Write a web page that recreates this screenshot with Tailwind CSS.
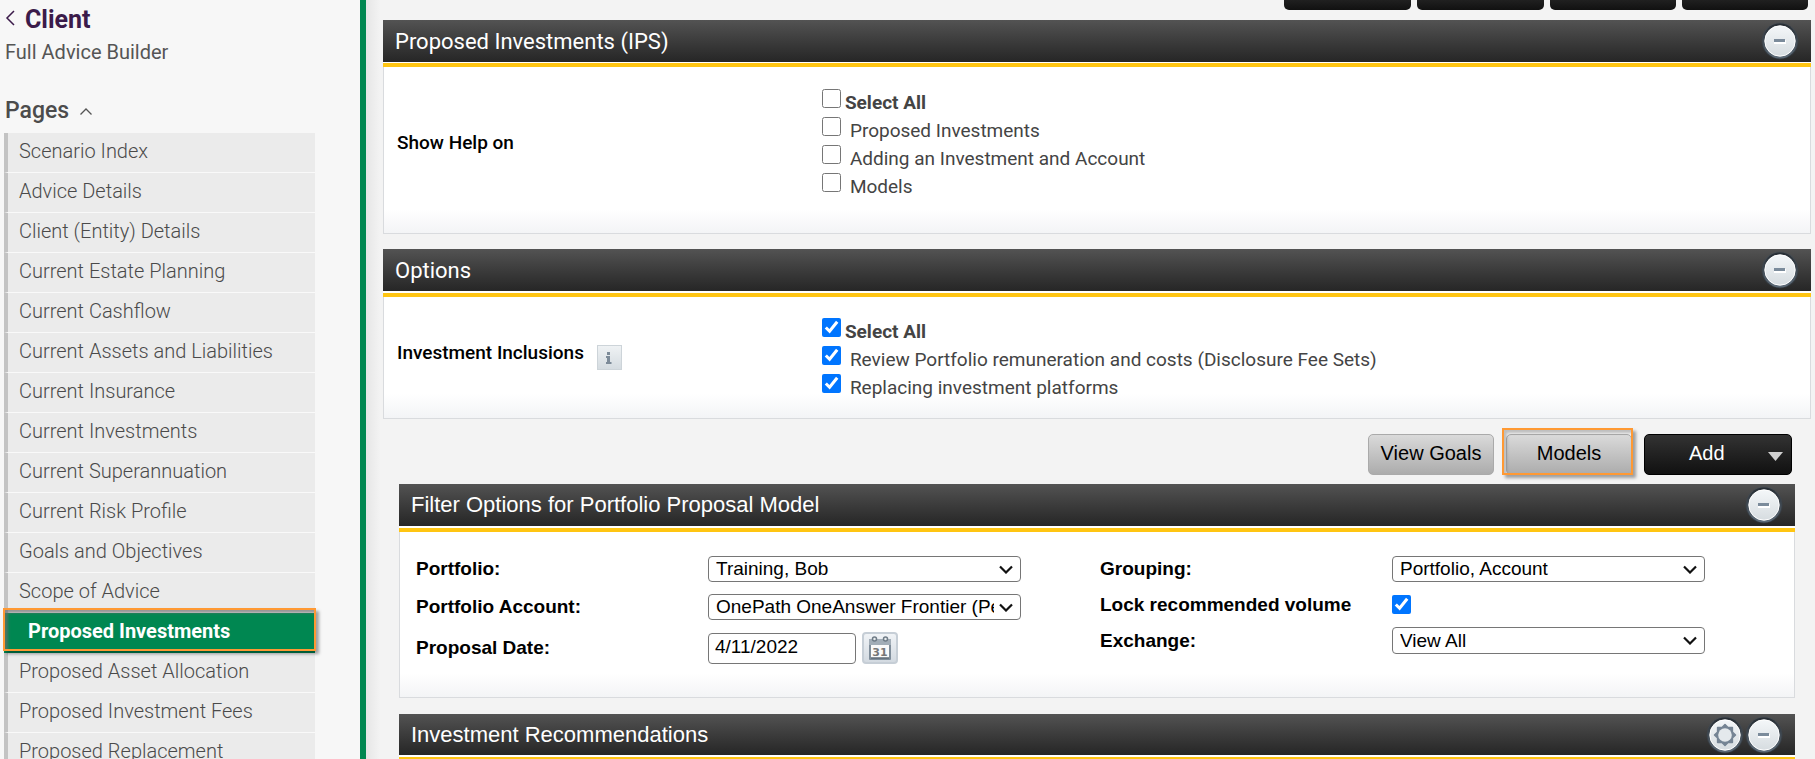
<!DOCTYPE html>
<html lang="en">
<head>
<meta charset="utf-8">
<title>Proposed Investments</title>
<script src="https://cdn.jsdelivr.net/npm/@tailwindcss/browser@4"></script>
</head>
<body class="h-screen overflow-hidden flex bg-[#f3f3f3] font-['Roboto',sans-serif] text-[#444]">

<svg class="absolute size-0" aria-hidden="true">
  <defs>
    <linearGradient id="disc" x1="0" y1="0" x2="0" y2="1"><stop offset="0" stop-color="#f4f7f9"/><stop offset="1" stop-color="#d6dce0"/></linearGradient>
    <linearGradient id="rim" x1="0" y1="0" x2="0" y2="1"><stop offset="0" stop-color="#262c32"/><stop offset="1" stop-color="#5d6b78"/></linearGradient>
  </defs>
  <symbol id="round" viewBox="0 0 38 38">
    <circle cx="19" cy="19" r="18.5" fill="#3d4c5a" opacity=".4"/>
    <circle cx="19" cy="19" r="17.5" fill="url(#rim)"/>
    <circle cx="19" cy="19" r="15.2" fill="url(#disc)" stroke="#fff" stroke-width="1"/>
  </symbol>
  <symbol id="minus" viewBox="0 0 38 38">
    <use href="#round"/>
    <rect x="13" y="18" width="12" height="4" fill="#fff"/>
    <rect x="13" y="17" width="11" height="3" fill="#7b8b9b"/>
  </symbol>
  <symbol id="gear" viewBox="0 0 38 38">
    <use href="#round"/>
    <path d="M19 8.500 22 11.600 26.400 11.600 26.400 16 29.500 19 26.400 22 26.400 26.400 22 26.400 19 29.500 16 26.400 11.600 26.400 11.600 22 8.500 19 11.600 16 11.600 11.600 16 11.600Z" fill="#758494" stroke="#758494" stroke-width="1.500" stroke-linejoin="round"/>
    <circle cx="19" cy="19" r="6.800" fill="#e4e9ec"/>
  </symbol>
  <symbol id="chevron" viewBox="0 0 14 9"><path d="M1 1.500 7 7.500 13 1.500" fill="none" stroke="#111" stroke-width="2.200"/></symbol>
</svg>

<aside class="w-[366px] shrink-0 border-r-6 border-[#008751] bg-[#f7f7f7] overflow-hidden">
  <header class="pl-[5px] pt-1">
    <a href="#" class="flex items-center gap-[10px] text-[25px] leading-8 font-bold text-[#3b1b4a]">
      <svg class="w-[10px] h-4 -mt-1" viewBox="0 0 10 16" fill="none" stroke="#3b1b4a" stroke-width="1.5" aria-hidden="true"><path d="M9 1 2 8 9 15"/></svg>
      <span>Client</span>
    </a>
    <p class="text-xl leading-8 text-[#555]">Full Advice Builder</p>
  </header>
  <button type="button" class="mt-[25px] pl-[5px] flex items-center gap-[11px] text-[23px] leading-9 font-medium text-[#4c4c4c]">Pages
    <svg class="w-3 h-[7px]" viewBox="0 0 12 7" fill="none" stroke="#555" stroke-width="1.3" aria-hidden="true"><path d="M.5 6.5 6 1 11.5 6.5"/></svg>
  </button>
  <nav class="mt-1 ml-1 w-[311px] text-xl font-light text-[#4a4a4a]">
    <a href="#" class="flex items-center h-10 pl-[11px] pb-[3px] border-l-4 border-l-[#c3c3c3] border-b border-b-[#f9f9f9] bg-[#ebebeb]">Scenario Index</a>
    <a href="#" class="flex items-center h-10 pl-[11px] pb-[3px] border-l-4 border-l-[#c3c3c3] border-b border-b-[#f9f9f9] bg-[#ebebeb]">Advice Details</a>
    <a href="#" class="flex items-center h-10 pl-[11px] pb-[3px] border-l-4 border-l-[#c3c3c3] border-b border-b-[#f9f9f9] bg-[#ebebeb]">Client (Entity) Details</a>
    <a href="#" class="flex items-center h-10 pl-[11px] pb-[3px] border-l-4 border-l-[#c3c3c3] border-b border-b-[#f9f9f9] bg-[#ebebeb]">Current Estate Planning</a>
    <a href="#" class="flex items-center h-10 pl-[11px] pb-[3px] border-l-4 border-l-[#c3c3c3] border-b border-b-[#f9f9f9] bg-[#ebebeb]">Current Cashflow</a>
    <a href="#" class="flex items-center h-10 pl-[11px] pb-[3px] border-l-4 border-l-[#c3c3c3] border-b border-b-[#f9f9f9] bg-[#ebebeb]">Current Assets and Liabilities</a>
    <a href="#" class="flex items-center h-10 pl-[11px] pb-[3px] border-l-4 border-l-[#c3c3c3] border-b border-b-[#f9f9f9] bg-[#ebebeb]">Current Insurance</a>
    <a href="#" class="flex items-center h-10 pl-[11px] pb-[3px] border-l-4 border-l-[#c3c3c3] border-b border-b-[#f9f9f9] bg-[#ebebeb]">Current Investments</a>
    <a href="#" class="flex items-center h-10 pl-[11px] pb-[3px] border-l-4 border-l-[#c3c3c3] border-b border-b-[#f9f9f9] bg-[#ebebeb]">Current Superannuation</a>
    <a href="#" class="flex items-center h-10 pl-[11px] pb-[3px] border-l-4 border-l-[#c3c3c3] border-b border-b-[#f9f9f9] bg-[#ebebeb]">Current Risk Profile</a>
    <a href="#" class="flex items-center h-10 pl-[11px] pb-[3px] border-l-4 border-l-[#c3c3c3] border-b border-b-[#f9f9f9] bg-[#ebebeb]">Goals and Objectives</a>
    <a href="#" class="flex items-center h-10 pl-[11px] pb-1 border-l-4 border-l-[#c3c3c3] bg-[#ebebeb]">Scope of Advice</a>
    <a href="#" aria-current="page" class="relative flex items-center h-10 pl-6 pb-1 bg-[#008751] font-bold text-white">Proposed Investments
      <span class="absolute -inset-x-px -top-[5px] bottom-[2px] border-2 border-[#ff9933] shadow-[3px_3px_3px_rgba(0,0,0,.35),inset_3px_3px_3px_rgba(110,110,110,.7)]"></span>
    </a>
    <a href="#" class="flex items-center h-10 pl-[11px] pb-[3px] border-l-4 border-l-[#c3c3c3] border-b border-b-[#f9f9f9] bg-[#ebebeb]">Proposed Asset Allocation</a>
    <a href="#" class="flex items-center h-10 pl-[11px] pb-[3px] border-l-4 border-l-[#c3c3c3] border-b border-b-[#f9f9f9] bg-[#ebebeb]">Proposed Investment Fees</a>
    <a href="#" class="flex items-center h-10 pl-[11px] pb-[3px] border-l-4 border-l-[#c3c3c3] border-b border-b-[#f9f9f9] bg-[#ebebeb]">Proposed Replacement</a>
  </nav>
</aside>

<main class="flex-1 min-w-0 pl-[17px] pr-1 bg-[linear-gradient(to_right,#e6e6e6,#f3f3f3_14px)]">
  <div class="flex justify-end gap-1.5 pr-[3px]">
    <button type="button" aria-label="Action 1" class="w-[127px] h-[10px] rounded-b-[5px] bg-linear-to-b from-[#202020] to-[#111]"></button>
    <button type="button" aria-label="Action 2" class="w-[127px] h-[10px] rounded-b-[5px] bg-linear-to-b from-[#202020] to-[#111]"></button>
    <button type="button" aria-label="Action 3" class="w-[126px] h-[10px] rounded-b-[5px] bg-linear-to-b from-[#202020] to-[#111]"></button>
    <button type="button" aria-label="Action 4" class="w-[126px] h-[10px] rounded-b-[5px] bg-linear-to-b from-[#202020] to-[#111]"></button>
  </div>

  <section class="mt-[10px]">
    <div class="flex items-center justify-between h-[42px] pl-3 pr-3 bg-linear-to-b from-[#535353] to-[#262626]">
      <h2 class="text-[22px] text-white">Proposed Investments (IPS)</h2>
      <button type="button" aria-label="Collapse"><svg class="size-[38px]"><use href="#minus"/></svg></button>
    </div>
    <div class="h-px bg-white"></div>
    <div class="h-1 bg-[#ffc512]"></div>
    <div class="grid grid-cols-[30%_1fr] items-start pl-[13px] pt-[22px] pb-8 border border-t-0 border-[#d9dbde] bg-[linear-gradient(to_top,#f3f4f6,#fff_24px)] text-[19px] leading-7">
      <h3 class="mt-10 font-medium text-black">Show Help on</h3>
      <div class="pl-px">
        <label class="flex gap-1 font-bold"><input type="checkbox" class="size-[19px]">Select All</label>
        <label class="flex gap-[9px]"><input type="checkbox" class="size-[19px]">Proposed Investments</label>
        <label class="flex gap-[9px]"><input type="checkbox" class="size-[19px]">Adding an Investment and Account</label>
        <label class="flex gap-[9px]"><input type="checkbox" class="size-[19px]">Models</label>
      </div>
    </div>
  </section>

  <section class="mt-[15px]">
    <div class="flex items-center justify-between h-[42px] pl-3 pr-3 bg-linear-to-b from-[#535353] to-[#262626]">
      <h2 class="text-[22px] text-white">Options</h2>
      <button type="button" aria-label="Collapse"><svg class="size-[38px]"><use href="#minus"/></svg></button>
    </div>
    <div class="h-0.5 bg-white"></div>
    <div class="h-1 bg-[#ffc512]"></div>
    <div class="grid grid-cols-[30%_1fr] items-start pl-[13px] pt-[21px] pb-4 border border-t-0 border-[#d9dbde] bg-[linear-gradient(to_top,#f3f4f6,#fff_24px)] text-[19px] leading-7">
      <div class="mt-[21px] h-[31px] flex gap-[13px]">
        <h3 class="font-medium text-black">Investment Inclusions</h3>
        <button type="button" aria-label="Information" class="self-end size-[25px] flex items-center justify-center border border-[#cdd4d9] bg-linear-to-b from-[#eff2f4] to-[#d5dce1]">
          <svg class="w-[6px] h-3" viewBox="0 0 6 12" fill="#7d8b99" aria-hidden="true"><path d="M1 0h3v3H1zM0 4h4v6h1.5v2H0v-2h1V6H0z"/></svg>
        </button>
      </div>
      <div class="pl-px">
        <label class="flex gap-1 font-bold"><input type="checkbox" checked class="size-[19px]">Select All</label>
        <label class="flex gap-[9px]"><input type="checkbox" checked class="size-[19px]">Review Portfolio remuneration and costs (Disclosure Fee Sets)</label>
        <label class="flex gap-[9px]"><input type="checkbox" checked class="size-[19px]">Replacing investment platforms</label>
      </div>
    </div>
  </section>

  <div class="px-4 font-['Liberation_Sans',Arial,sans-serif] text-black">
    <div class="mt-[15px] flex justify-end gap-3 pr-[3px] text-xl">
      <button type="button" class="w-[126px] h-[41px] pb-1 rounded-[5px] border border-[#aaa] bg-linear-to-b from-[#dadada] to-[#acacac]">View Goals</button>
      <button type="button" class="relative w-[126px] h-[41px] pb-1 rounded-[5px] border border-[#aaa] bg-linear-to-b from-[#dadada] to-[#acacac]">Models
        <span class="absolute -left-[5px] -right-[2px] -top-[7px] -bottom-px border-2 border-[#ff9933] shadow-[3px_3px_3px_rgba(0,0,0,.35),inset_3px_3px_3px_rgba(110,110,110,.4)]"></span>
      </button>
      <button type="button" class="w-[148px] h-[41px] pl-11 pr-2 pb-1 flex items-center justify-between rounded-[5px] border border-black bg-linear-to-b from-[#333] to-[#111] text-white">Add
        <svg class="w-[15px] h-[9px] mt-2" viewBox="0 0 15 9" aria-hidden="true"><path d="M0 0H15L7.5 9Z" fill="#d0d0d0"/></svg>
      </button>
    </div>

    <section class="mt-[9px]">
      <div class="flex items-center justify-between h-[42px] pl-3 pr-3 bg-linear-to-b from-[#535353] to-[#262626]">
        <h2 class="text-[22px] leading-10 text-white">Filter Options for Portfolio Proposal Model</h2>
        <button type="button" aria-label="Collapse"><svg class="size-[38px]"><use href="#minus"/></svg></button>
      </div>
      <div class="h-0.5 bg-white"></div>
      <div class="h-1 bg-[#ffc512]"></div>
      <div class="grid grid-cols-2 items-start pl-4 pr-[10px] pt-6 pb-[33px] border border-t-0 border-[#d9dbde] bg-[linear-gradient(to_top,#f3f4f6,#fff_24px)] text-[19px]">
        <div class="flex flex-col gap-3">
          <div class="flex items-center">
            <label for="portfolio" class="w-[292px] font-bold leading-6">Portfolio:</label>
            <div class="relative">
              <select id="portfolio" class="block appearance-none w-[313px] h-[26px] pl-[7px] pr-[26px] rounded-[4px] border border-[#767676] bg-white leading-6"><option>Training, Bob</option></select>
              <svg class="absolute right-2 top-[9px] w-[14px] h-[9px] pointer-events-none"><use href="#chevron"/></svg>
            </div>
          </div>
          <div class="flex items-center">
            <label for="account" class="w-[292px] font-bold leading-6">Portfolio Account:</label>
            <div class="relative">
              <select id="account" class="block appearance-none w-[313px] h-[26px] pl-[7px] pr-[26px] rounded-[4px] border border-[#767676] bg-white leading-6"><option>OnePath OneAnswer Frontier (Personal)</option></select>
              <svg class="absolute right-2 top-[9px] w-[14px] h-[9px] pointer-events-none"><use href="#chevron"/></svg>
            </div>
          </div>
          <div class="flex items-center">
            <label for="date" class="w-[292px] font-bold leading-6">Proposal Date:</label>
            <input id="date" type="text" value="4/11/2022" class="w-[148px] h-[31px] px-1.5 pb-0.5 rounded-[4px] border border-[#767676] bg-white">
            <button type="button" aria-label="Choose date" class="ml-1.5 w-9 h-8 flex items-center justify-center rounded-[4px] border-2 border-[#c6ced6] bg-linear-to-b from-[#f0f3f6] to-[#d3dae1]">
              <svg class="w-6 h-[25px]" viewBox="0 0 24 25" aria-hidden="true">
                <rect x="1" y="3" width="22" height="21" rx="1" fill="#7f8d9a"/>
                <rect x="1" y="3" width="22" height="6" fill="#a2adb7"/>
                <rect x="3" y="9" width="18" height="13" fill="#fafafa"/>
                <path d="M3 22h18" stroke="#5f6b76" stroke-width="1.5"/>
                <circle cx="6.500" cy="3" r="2" fill="#e8ecef" stroke="#6f7b86" stroke-width="1.5"/>
                <circle cx="17.500" cy="3" r="2" fill="#e8ecef" stroke="#6f7b86" stroke-width="1.5"/>
                <text x="12" y="20" text-anchor="middle" font-family="DejaVu Sans, sans-serif" font-size="11" font-weight="bold" fill="#777">31</text>
              </svg>
            </button>
          </div>
        </div>
        <div class="flex flex-col gap-[13px]">
          <div class="flex items-center">
            <label for="grouping" class="w-[292px] font-bold leading-6">Grouping:</label>
            <div class="relative">
              <select id="grouping" class="block appearance-none w-[313px] h-[26px] pl-[7px] pr-[26px] rounded-[4px] border border-[#767676] bg-white leading-6"><option>Portfolio, Account</option></select>
              <svg class="absolute right-2 top-[9px] w-[14px] h-[9px] pointer-events-none"><use href="#chevron"/></svg>
            </div>
          </div>
          <div class="flex items-center h-[19px]">
            <label for="lock" class="w-[292px] font-bold leading-5">Lock recommended volume</label>
            <input id="lock" type="checkbox" checked class="size-[19px]">
          </div>
          <div class="flex items-center">
            <label for="exchange" class="w-[292px] font-bold leading-6">Exchange:</label>
            <div class="relative">
              <select id="exchange" class="block appearance-none w-[313px] h-[27px] pl-[7px] pr-[26px] rounded-[4px] border border-[#767676] bg-white leading-6"><option>View All</option></select>
              <svg class="absolute right-2 top-[9px] w-[14px] h-[9px] pointer-events-none"><use href="#chevron"/></svg>
            </div>
          </div>
        </div>
      </div>
    </section>

    <section class="mt-4">
      <div class="flex items-center justify-between h-[41px] pl-3 pr-3 bg-linear-to-b from-[#535353] to-[#262626]">
        <h2 class="text-[22px] leading-10 text-white">Investment Recommendations</h2>
        <div class="flex gap-px">
          <button type="button" aria-label="Settings"><svg class="size-[38px]"><use href="#gear"/></svg></button>
          <button type="button" aria-label="Collapse"><svg class="size-[38px]"><use href="#minus"/></svg></button>
        </div>
      </div>
      <div class="h-0.5 bg-white"></div>
      <div class="h-1 bg-[#ffc512]"></div>
    </section>
  </div>
</main>
</body>
</html>
